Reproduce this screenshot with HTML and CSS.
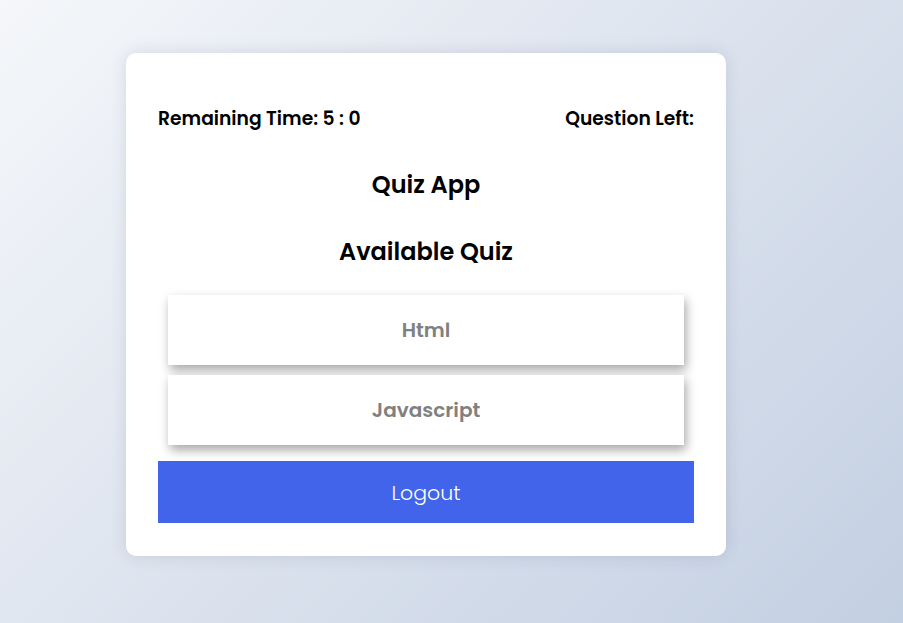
FILE: index.html
```html
<!DOCTYPE html>
<html lang="en">
<head>
<meta charset="utf-8">
<title>Quiz App</title>
<link rel="stylesheet" href="styles.css">
</head>
<body>
<main class="card">
  <div class="status">
    <span class="status-item">Remaining Time: 5 : 0</span>
    <span class="status-item">Question Left:</span>
  </div>
  <h1 class="title">Quiz App</h1>
  <h2 class="subtitle">Available Quiz</h2>
  <ul class="quiz-list">
    <li class="quiz-item">Html</li>
    <li class="quiz-item">Javascript</li>
  </ul>
  <button class="logout" type="button">Logout</button>
</main>
</body>
</html>
```

FILE: styles.css
```css
html, body {
  margin: 0;
  padding: 0;
  height: 100%;
}

body {
  background: linear-gradient(135deg, #f5f7fa 0%, #c3cfe2 100%);
  font-family: "Poppins", "Inter", "Open Sans", sans-serif;
  color: #000;
  overflow: hidden;
}

.card {
  box-sizing: border-box;
  width: 600px;
  margin: 53px 0 0 126px;
  padding: 20px 32px 33px;
  background: #fff;
  border-radius: 10px;
  box-shadow: 0 0 16px rgba(60, 70, 100, 0.15);
}

.status {
  display: flex;
  justify-content: space-between;
  margin-top: 32px;
  font-size: 18.72px;
  font-weight: 600;
  line-height: 27px;
}

.title,
.subtitle {
  margin: 0;
  text-align: center;
  font-size: 24px;
  font-weight: 600;
  line-height: 36px;
}

.title {
  margin-top: 35px;
}

.subtitle {
  margin-top: 31px;
}

.quiz-list {
  list-style: none;
  margin: 25px 10px 0;
  padding: 0;
  display: flex;
  flex-direction: column;
  gap: 10px;
}

.quiz-item {
  height: 70px;
  display: flex;
  align-items: center;
  justify-content: center;
  background: #fff;
  color: #808080;
  font-size: 20px;
  font-weight: 600;
  box-shadow: 2px 5px 10px rgba(0, 0, 0, 0.35);
}

.logout {
  display: block;
  width: 100%;
  height: 62px;
  margin-top: 16px;
  padding-top: 2px;
  border: none;
  background: #4264eb;
  color: #fff;
  font-family: inherit;
  font-size: 20.5px;
  font-weight: 300;
}
```
